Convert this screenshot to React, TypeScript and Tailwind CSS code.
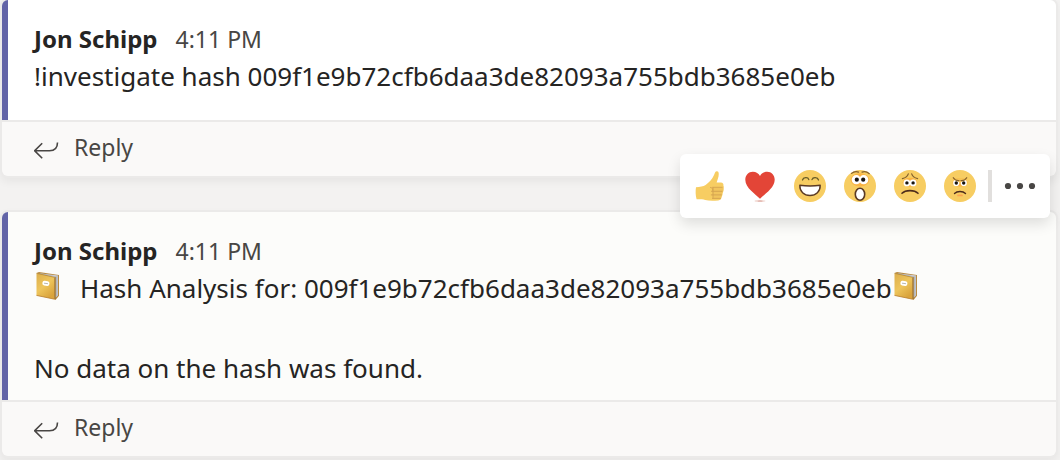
import type { ReactNode } from "react";

const HASH = "009f1e9b72cfb6daa3de82093a755bdb3685e0eb";

function ReplyIcon() {
  return (
    <svg viewBox="0 -4 26 22" className="h-[22px] w-[26px] shrink-0" fill="none" stroke="#484644" strokeWidth="1.6" aria-hidden="true">
      <path d="M8.200 1.200.7 8.700l7.500 7.500M1 8.700H15.500c5 0 8-3 8-8.200" />
    </svg>
  );
}

function BookIcon() {
  return (
    <svg viewBox="0 0 24 28" className="mx-0.5 mt-1 h-7 w-6 shrink-0" role="img" aria-label="Notebook">
      <defs>
        <linearGradient id="cover" x1="0" y1="0" x2="0.6" y2="1">
          <stop offset="0" stopColor="#dcae4c" />
          <stop offset="0.55" stopColor="#eec55c" />
          <stop offset="1" stopColor="#d9a33c" />
        </linearGradient>
      </defs>
      <path d="M1 .8 3 .1 23 3v20.8L19.5 28 16 25z" fill="#b88a42" />
      <path d="M2.5 1.2 22 3.6v20L19 26V5.5z" fill="#d3d5da" />
      <path d="M4 1.5 20.5 4.8v20M21.2 4v20" stroke="#a4a7ad" strokeWidth=".6" fill="none" />
      <path d="M.5 1.3 18.5 5.3V27.2L.5 23.4z" fill="url(#cover)" />
      <path d="M18.5 5.3 19.8 5V27l-1.3.5z" fill="#9c7436" />
      <path d="M.5 1.3 18.5 5.3" stroke="#b68b3d" strokeWidth=".8" />
      <path d="m.5 23.4 18 3.8" stroke="#b77d31" strokeWidth=".8" />
      <rect x="6.4" y="9" width="7" height="4.8" rx="2" fill="#fff" transform="rotate(7 10 11.4)" />
      <path d="m8 11.2 4 .5" stroke="#aaa69c" strokeWidth=".8" />
    </svg>
  );
}

function ThumbIcon() {
  return (
    <svg viewBox="0 0 32 32" className="size-8" aria-hidden="true">
      <path
        d="M2 17.2c3.8-.2 7.3-.6 9.6-2.2 3.8-2.7 6.7-6 8.300-9.700.8-2 1.300-4.200 3.100-4.100 2.200.2 1.900 3.200 1.500 5.200-.5 2.300-1.400 4.200-1.900 6.200h4.300c2 0 2.800 1.400 2.500 3 .6 1.200.6 2.600-.1 3.700.4 1.400.1 2.800-.8 3.700.2 1.600-.1 2.800-1 3.700 0 2.300-1 3.500-3.300 3.700-5.600.5-9.600.4-13-.5-2.600-.8-5.500-.7-8.600-.7C1.500 25.500 1.400 20.800 2 17.200z"
        fill="#f7cd62"
      />
      <path d="M18.600 17.500h10.200c1.200 1.200.900 2.800-.1 3.700l-.8 4.400-1 3H20c-1.800-2.900-2-7.700-1.400-11.100z" fill="#f1c45d" />
      <path d="M16.500 17.400c1.700.3 2.300 1.200 2.200 2.800M18.700 17.300h9.500M17.500 21.300h10.500M17.300 24.900h10M18.500 28.400h7.800M19 17.500v10.700" fill="none" stroke="#d3a24f" strokeWidth=".9" strokeLinecap="round" />
    </svg>
  );
}

function HeartIcon() {
  return (
    <svg viewBox="0 0 32 32" className="size-8" aria-hidden="true">
      <ellipse cx="16" cy="31" rx="5.500" ry=".9" fill="#f1d7d1" />
      <ellipse cx="16" cy="31" rx="2.500" ry=".5" fill="#dba59c" />
      <path d="M16 28.800C11.500 24 1.300 17.900 1.300 9.700c0-4.500 3.300-8 7.500-8 3.300 0 5.900 1.700 7.200 4.200 1.300-2.500 3.900-4.200 7.200-4.200 4.200 0 7.500 3.500 7.500 8C30.700 17.900 20.500 24 16 28.800z" fill="#e34537" />
    </svg>
  );
}

function Face({ children }: { children: ReactNode }) {
  return (
    <svg viewBox="0 0 32 32" className="size-8" fill="none" strokeLinecap="round" aria-hidden="true">
      <circle cx="16" cy="16" r="16" fill="#f7cd62" />
      {children}
    </svg>
  );
}

function LaughIcon() {
  return (
    <Face>
      <path d="M8.500 10c.8-2.800 5.500-3.300 6.300-.4M18 9.600c1-3 5.700-2.400 6.500.4" stroke="#665b28" strokeWidth="1.300" />
      <path d="M5.800 15.300c6.500.8 14 .8 20.400 0 .2 6-4.300 10.200-10.200 10.200S5.600 21.300 5.800 15.300z" fill="#fff" stroke="#5a3a24" strokeWidth="1.400" strokeLinejoin="round" />
    </Face>
  );
}

function SurprisedIcon() {
  return (
    <Face>
      <path d="M7.600 3.400c2-1.700 4.700-2.100 7-1.300M18 2.100c2.600-.8 5.400-.1 7.300 1.600" stroke="#84602d" strokeWidth="1.200" />
      <ellipse cx="16" cy="9.800" rx="9.500" ry="6.600" fill="#fab443" />
      <circle cx="12.300" cy="9.700" r="4.600" fill="#fff" />
      <circle cx="19.700" cy="9.700" r="4.600" fill="#fff" />
      <circle cx="12.800" cy="9.700" r="2.100" fill="#171410" />
      <circle cx="19.200" cy="9.700" r="2.100" fill="#171410" />
      <ellipse cx="16" cy="24.300" rx="4.700" ry="6" fill="#fff" stroke="#5a3a24" strokeWidth="1.600" />
    </Face>
  );
}

function SadIcon() {
  return (
    <Face>
      <path d="M8.400 8.600c3-.7 5.200-2.400 5.900-4.700M23.600 8.600c-3-.7-5.200-2.400-5.900-4.700" stroke="#84602d" strokeWidth="1.200" />
      <ellipse cx="16" cy="12.300" rx="7.300" ry="4.500" fill="#fab443" />
      <circle cx="12.900" cy="12.900" r="3.400" fill="#fff" />
      <circle cx="19.100" cy="12.900" r="3.400" fill="#fff" />
      <circle cx="12.900" cy="12.900" r="1.700" fill="#171410" />
      <circle cx="19.100" cy="12.900" r="1.700" fill="#171410" />
      <path d="M8 23.300c3.500-3.600 12.500-3.600 16 0" stroke="#4d2c1b" strokeWidth="1.600" />
    </Face>
  );
}

function AngryIcon() {
  return (
    <Face>
      <ellipse cx="16" cy="12.400" rx="7.500" ry="4" fill="#fab443" />
      <circle cx="12.200" cy="12.900" r="3.100" fill="#fff" />
      <circle cx="19.800" cy="12.900" r="3.100" fill="#fff" />
      <path d="M8.500 9.300 14.800 12h2.400l6.300-2.700V8H8.500z" fill="#f7c456" />
      <circle cx="12.300" cy="13" r="1.700" fill="#171410" />
      <circle cx="19.700" cy="13" r="1.700" fill="#171410" />
      <path d="M9.300 7.700c1.300 2.100 3.200 3 5.700 2.800M22.700 7.700c-1.300 2.100-3.200 3-5.700 2.800" stroke="#84602d" strokeWidth="1.200" />
      <path d="M10.500 23.400c2.600-2.600 8.400-2.600 11 0" stroke="#4d2c1b" strokeWidth="1.400" />
      <path d="M14 25.400h4" stroke="#fba552" strokeWidth="1.700" />
    </Face>
  );
}

const reactions = [
  { label: "Like", Icon: ThumbIcon },
  { label: "Heart", Icon: HeartIcon },
  { label: "Laugh", Icon: LaughIcon },
  { label: "Surprised", Icon: SurprisedIcon },
  { label: "Sad", Icon: SadIcon },
  { label: "Angry", Icon: AngryIcon },
];

function ReactionBar() {
  return (
    <div role="toolbar" aria-label="Reactions" className="absolute -top-[58px] right-1.5 flex h-16 items-center rounded-md bg-white px-3.5 shadow-[0_6px_14px_rgba(0,0,0,0.12)]">
      <div className="flex gap-[18px]">
        {reactions.map(({ label, Icon }) => (
          <button key={label} type="button" aria-label={label}>
            <Icon />
          </button>
        ))}
      </div>
      <div className="mx-3 h-8 w-1 bg-[#e1dfdd]" />
      <button type="button" aria-label="More options">
        <svg viewBox="0 0 32 32" className="size-8" fill="#484644" aria-hidden="true">
          <circle cx="4" cy="16" r="3.100" />
          <circle cx="16" cy="16" r="3.100" />
          <circle cx="28" cy="16" r="3.100" />
        </svg>
      </button>
    </div>
  );
}

type MessageProps = { bodyClass: string; toolbar?: ReactNode; children: ReactNode };

function Message({ bodyClass, toolbar, children }: MessageProps) {
  return (
    <article className="relative rounded-md shadow-[0_0_0_2px_#ebeae9,0_4px_8px_2px_rgba(0,0,0,0.05)]">
      <div className={`rounded-t-md border-l-6 border-[#6264a7] pt-6 pl-[26px] ${bodyClass}`}>
        <header className="mb-0.5 flex items-baseline gap-[18px] leading-[30px]">
          <h2 className="text-[24px] leading-[30px] font-bold">Jon Schipp</h2>
          <time className="text-[23px] leading-[30px] text-[#484644]">4:11 PM</time>
        </header>
        <div className="text-[26px] leading-10">{children}</div>
      </div>
      <button type="button" className="flex h-14 w-full items-center gap-3.5 rounded-b-md border-t-2 border-[#ebeae9] bg-[#faf9f8] pl-8 text-[23px] leading-[30px] text-[#484644]">
        <ReplyIcon />
        <span className="pb-1">Reply</span>
      </button>
      {toolbar}
    </article>
  );
}

export default function App() {
  return (
    <main className="flex min-h-screen flex-col gap-9 bg-[#f3f2f1] pr-1 pb-1 pl-0.5 font-['Noto_Sans','Open_Sans',sans-serif] text-[#252423]">
      <Message bodyClass="bg-white pb-6">
        <p>!investigate hash {HASH}</p>
      </Message>
      <Message bodyClass="bg-[#fcfcfa] pb-3" toolbar={<ReactionBar />}>
        <p className="flex">
          <BookIcon />
          <span className="pl-[18px]">Hash Analysis for: {HASH}</span>
          <BookIcon />
        </p>
        <p className="mt-10">No data on the hash was found.</p>
      </Message>
    </main>
  );
}
